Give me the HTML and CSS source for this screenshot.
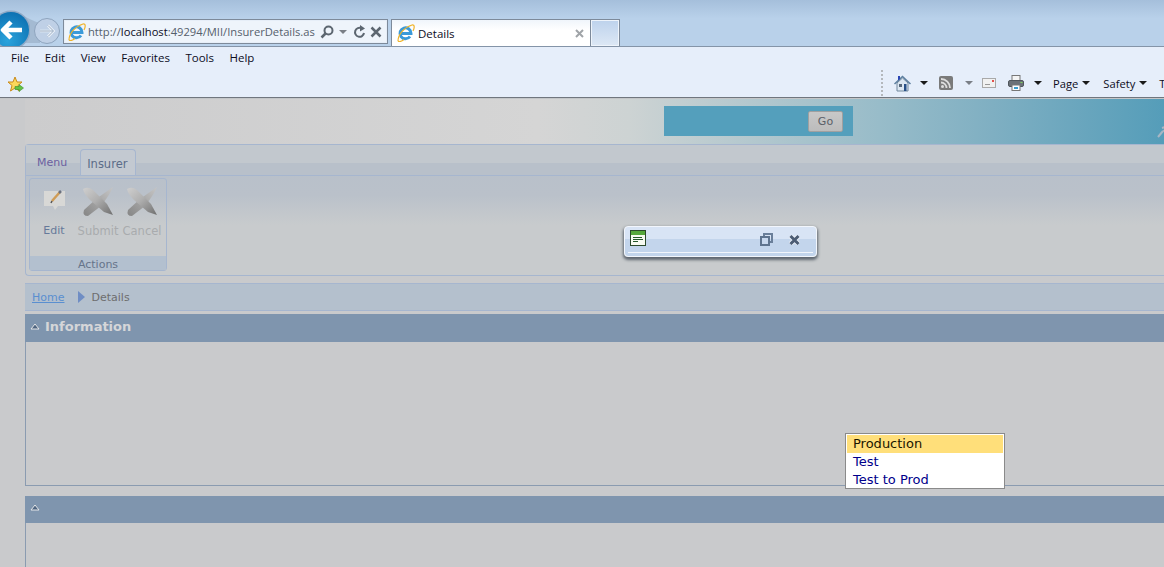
FILE: index.html
```html
<!DOCTYPE html>
<html lang="en">
<head>
<meta charset="utf-8">
<title>Details</title>
<link rel="stylesheet" href="styles.css">
</head>
<body>
<div class="chrome">
  <div class="navbar">
    <svg class="swoosh" width="40" height="30" viewBox="0 0 40 30"><path d="M0 0H8C24 0 30 8 40 10V30H0Z" fill="#a4bad2"/></svg>
    <div class="back"><svg width="30" height="40" viewBox="0 0 30 40"><defs><radialGradient id="bk" cx="0.4" cy="0.8" r="0.9"><stop offset="0" stop-color="#2aa3dc"/><stop offset="1" stop-color="#0b6cae"/></radialGradient></defs><circle cx="11" cy="20" r="19.500" fill="#8fa9c6"/><circle cx="11" cy="20" r="18" fill="url(#bk)"/><path d="M2 20H22M11 12L3 20L11 28" fill="none" stroke="#fff" stroke-width="4.500" stroke-linejoin="round"/></svg></div>
    <div class="forward"><svg width="28" height="28" viewBox="0 0 28 28"><circle cx="14" cy="14" r="12.500" fill="#bfd0e6" stroke="#8ea4be"/><path d="M7 14H20M15 8.500L20.500 14L15 19.500" fill="none" stroke="#f0f5fb" stroke-width="2.500"/><path d="M7 14H20M15 8.500L20.500 14L15 19.500" fill="none" stroke="#97aac0" stroke-width="1"/></svg></div>
    <div class="address">
      <svg class="ie" width="18" height="18" viewBox="0 0 18 18"><use href="#ie-logo"/></svg>
      <span class="url">http://<b>localhost</b>:49294/MII/InsurerDetails.as</span>
      <svg width="14" height="14" viewBox="0 0 14 14"><circle cx="8.500" cy="5.500" r="4" fill="none" stroke="#5c6670" stroke-width="2"/><path d="M5.500 8.500L1.500 12.500" stroke="#5c6670" stroke-width="2.500"/></svg>
      <span class="caret grey"></span>
      <svg class="refresh" width="13" height="14" viewBox="0 0 13 14"><path d="M11 8A4.500 4.500 0 1 1 8.500 3.200" fill="none" stroke="#5c6670" stroke-width="2"/><path d="M7 0L12 3.500L7 6.500Z" fill="#5c6670"/></svg>
      <svg class="stop" width="12" height="12" viewBox="0 0 12 12"><path d="M1.500 1.500L10.500 10.500M10.500 1.500L1.500 10.500" stroke="#5c6670" stroke-width="2.500"/></svg>
    </div>
    <div class="tab">
      <svg width="18" height="18" viewBox="0 0 18 18"><use href="#ie-logo"/></svg>
      <span class="tab-title">Details</span>
      <svg width="9" height="9" viewBox="0 0 9 9"><path d="M1 1L8 8M8 1L1 8" stroke="#a0a4a8" stroke-width="2"/></svg>
    </div>
    <div class="newtab"></div>
  </div>
  <div class="menubar">
    <span>File</span><span>Edit</span><span>View</span><span>Favorites</span><span>Tools</span><span>Help</span>
  </div>
  <div class="favbar">
    <svg class="star" width="17" height="17" viewBox="0 0 17 17"><path d="M8 1L10 6H15L11 9.500L12.500 15L8 12L3.500 15L5 9.500L1 6H6Z" fill="#fbd85c" stroke="#c98a1a"/><path d="M8 10.500H12V8.500L16.500 12L12 15.500V13.500H8Z" fill="#63c244" stroke="#3c8f2c" stroke-width=".6"/></svg>
    <div class="cmd">
      <span class="grip"></span>
      <svg class="i-home" width="17" height="17" viewBox="0 0 17 17"><path d="M3 8V16H14V8L8.500 3Z" fill="#dce7f2" stroke="#71879c"/><path d="M0.500 9L8.500 1.500L16.500 9" fill="none" stroke="#5d7f9f" stroke-width="1.500"/><path d="M4 1H6V4L4 5.500Z" fill="#2a45b5"/><rect x="5" y="9" width="3" height="3" fill="#56677a"/><rect x="10" y="9" width="2.500" height="7" fill="#274f86"/></svg>
      <span class="caret c1"></span>
      <svg class="i-rss" width="14" height="14" viewBox="0 0 14 14"><rect width="14" height="14" rx="2" fill="#7a7a7a"/><circle cx="3.500" cy="10.500" r="1.500" fill="#ddd"/><path d="M2 6.500A5.500 5.500 0 0 1 7.500 12M2 3A9 9 0 0 1 11 12" fill="none" stroke="#ddd" stroke-width="1.800"/></svg>
      <span class="caret grey c2"></span>
      <svg class="i-mail" width="14" height="10" viewBox="0 0 14 10"><rect x=".5" y=".5" width="13" height="9" fill="#f1f1f1" stroke="#a9a9a9"/><rect x="3" y="6" width="5" height="1" fill="#999"/><rect x="10" y="2" width="2" height="2" fill="#e2504c"/></svg>
      <svg class="i-print" width="16" height="16" viewBox="0 0 16 16"><rect x="4" y=".5" width="8" height="6" fill="#f4f4f4" stroke="#777"/><rect x=".5" y="5.500" width="15" height="6" rx="1.500" fill="#6c7278" stroke="#50565c"/><rect x="4" y="10" width="8" height="5.500" fill="#fff" stroke="#777"/><rect x="6" y="12" width="4" height="2" fill="#3b9ecf"/><rect x="12.500" y="7" width="2" height="1" fill="#7fd05a"/></svg>
      <span class="caret c3"></span>
      <span class="cmd-label l-page">Page</span><span class="caret c4"></span>
      <span class="cmd-label l-safety">Safety</span><span class="caret c5"></span>
      <span class="cmd-label l-tools">T</span>
    </div>
  </div>
</div>

<div class="page">
  <div class="masthead">
    <div class="searchbox"><button class="go">Go</button></div>
    <svg class="wrench" width="9" height="12" viewBox="0 0 9 12"><path d="M1 11L6 5M5 2L8 1L8.500 4.500L6 5" fill="none" stroke="#a8b6c4" stroke-width="2"/></svg>
  </div>
  <div class="content">
    <div class="ribbon">
      <div class="ribbon-tabs">
        <span class="rtab">Menu</span>
        <span class="rtab active">Insurer</span>
      </div>
      <div class="ribbon-body">
        <div class="rgroup">
          <div class="rgroup-items">
            <div class="ritem">
              <svg width="26" height="26" viewBox="0 0 26 26"><path d="M3 5H24V20H17L14 24L12 20H3Z" fill="#d8d8d6"/><path d="M11 15L19 6" stroke="#cf9c56" stroke-width="2.500"/><path d="M18 7L20 5" stroke="#6a7180" stroke-width="2.500"/><path d="M11 15L10 17" stroke="#555" stroke-width="1.500"/></svg>
              <span class="enabled">Edit</span>
            </div>
            <div class="ritem wide">
              <svg width="32" height="32" viewBox="0 0 32 32"><use href="#x-mark"/></svg>
              <span>Submit</span>
            </div>
            <div class="ritem wide">
              <svg width="32" height="32" viewBox="0 0 32 32"><use href="#x-mark"/></svg>
              <span>Cancel</span>
            </div>
          </div>
          <div class="rgroup-title">Actions</div>
        </div>
      </div>
    </div>
    <div class="crumbs">
      <a class="crumb-link" href="#">Home</a>
      <svg width="7" height="12" viewBox="0 0 7 12"><path d="M0 0L7 6L0 12Z" fill="#6f8dc4"/></svg>
      <span>Details</span>
    </div>
    <section class="panel first">
      <header class="panel-head">
        <svg class="tri" width="10" height="7" viewBox="0 0 10 7"><path d="M5 1L9 6H1Z" fill="#4f6580" stroke="#e4e6e8"/></svg>
        <span class="panel-title">Information</span>
      </header>
      <div class="panel-body"></div>
    </section>
    <section class="panel second">
      <header class="panel-head">
        <svg class="tri" width="10" height="7" viewBox="0 0 10 7"><path d="M5 1L9 6H1Z" fill="#4f6580" stroke="#e4e6e8"/></svg>
      </header>
      <div class="panel-body"></div>
    </section>
  </div>
</div>

<div class="dialog">
  <svg class="dlg-icon" width="16" height="16" viewBox="0 0 16 16"><rect x=".5" y=".5" width="15" height="15" fill="#f7fbf2" stroke="#2b4a2b"/><rect x="1" y="1" width="14" height="4" fill="#55a83c"/><path d="M3 7.500H12M3 9.500H13M3 11.500H8" stroke="#24572b"/></svg>
  <svg class="dlg-restore" width="13" height="13" viewBox="0 0 13 13"><rect x="4" y="1" width="8" height="8" fill="none" stroke="#6a7f9a" stroke-width="2"/><rect x="1" y="4" width="8" height="8" fill="#c8d8ee" stroke="#5f748f" stroke-width="2"/></svg>
  <svg class="dlg-close" width="11" height="10" viewBox="0 0 11 10"><path d="M1.500 1L9.500 9M9.500 1L1.500 9" stroke="#f2f6fc" stroke-width="4.500"/><path d="M1.500 1L9.500 9M9.500 1L1.500 9" stroke="#4c5c74" stroke-width="3"/></svg>
</div>

<ul class="dropdown">
  <li class="selected">Production</li>
  <li>Test</li>
  <li>Test to Prod</li>
</ul>

<svg class="defs" width="0" height="0">
  <defs>
    <linearGradient id="xa" x1="0" y1="0" x2="1" y2="1"><stop offset="0" stop-color="#cfcfcf"/><stop offset=".45" stop-color="#b0b0b0"/><stop offset="1" stop-color="#6f6f6f"/></linearGradient>
    <linearGradient id="xb" x1="1" y1="0" x2="0" y2="1"><stop offset="0" stop-color="#c6c6c6"/><stop offset="1" stop-color="#858585"/></linearGradient>
    <g id="x-mark">
      <path d="M31 1L14 13L2 24Q0 30 6 30L19 20Q27 10 31 1Z" fill="url(#xb)"/>
      <path d="M1 3Q6 0 11 4L25 18L31 29L22 26L8 14Q2 8 1 3Z" fill="url(#xa)"/>
    </g>
    <g id="ie-logo">
      <path d="M3 9.500H14A5.500 5.500 0 1 0 13 12.500" fill="none" stroke="#3a9ad9" stroke-width="3"/>
      <path d="M1 17C1 10 8 3 15 1C18 0.500 17.500 4 16 7M1 17C2 18 5 17 7 15.500" fill="none" stroke="#f0b429" stroke-width="1.200"/>
    </g>
  </defs>
</svg>
</body>
</html>
```
FILE: styles.css
```css
* { box-sizing: border-box; }
html, body { margin: 0; padding: 0; height: 567px; width: 1164px; overflow: hidden; }
body { position: relative; background: #c9cacc; font-family: "DejaVu Sans", sans-serif; }

.chrome { height: 99px; border-bottom: 1px solid #c4c6c8; font-family: "Open Sans", "Noto Sans", sans-serif; font-size: 11.500px; color: #0c0c1c; background: #e6eefa; }
.navbar { height: 46.500px; position: relative; overflow: hidden; display: flex; align-items: flex-start; background: linear-gradient(#a5bfdb, #b9d1ea 40%, #b9d1ea); border-bottom: 1px solid #8494a8; }
.swoosh { position: absolute; left: 0; top: 13px; }
.back { position: relative; width: 30px; height: 40px; margin-top: 10px; flex: none; }
.back svg { display: block; }
.forward { position: relative; width: 28px; height: 28px; margin: 17px 0 0 3px; flex: none; }
.forward svg { display: block; }
.address { position: relative; width: 325px; height: 25px; margin: 19px 0 0 2px; flex: none; display: flex; align-items: center; padding-left: 4px; background: #eef4fb; border: 1px solid #7d8a9a; outline: 1px solid #e6eef8; outline-offset: -2px; }
.url { width: 232px; margin-left: 2px; color: #55606c; font-size: 11.200px; white-space: nowrap; overflow: hidden; }
.url b { font-weight: 400; color: #0c0c1c; }
.caret { display: inline-block; width: 0; height: 0; border: 4px solid transparent; border-top: 4px solid #1a1a1a; border-bottom: 0; flex: none; }
.caret.grey { border-top-color: #7a7f86; }
.address .caret { margin: 1px 0 0 5px; }
.refresh { margin-left: 6px; }
.stop { margin-left: 4px; }
.tab { width: 200px; height: 27px; margin: 19px 0 0 3px; flex: none; display: flex; align-items: center; padding: 0 6px 0 5px; background: linear-gradient(#f0f5fb, #fff 40%); border: 1px solid #7d8a9a; border-bottom: 0; }
.tab-title { flex: 1; margin-left: 3px; font-size: 11.500px; }
.newtab { width: 29px; height: 27px; margin-top: 19px; flex: none; background: linear-gradient(#bdd2ec, #dde8f5); border: 1px solid #7d8a9a; border-left: 0; border-bottom: 0; box-shadow: inset 0 0 0 1px #eef4fb; }
.menubar { height: 23px; display: flex; gap: 15.500px; padding-left: 11px; align-items: center; background: #e6eefa; line-height: 22px; }
.favbar { height: 28.500px; display: flex; align-items: center; padding-left: 7px; background: #e6eefa; position: relative; border-bottom: 1.500px solid #70767e; }
.star { flex: none; margin-top: 2px; }
.cmd { margin-left: 857px; display: flex; align-items: center; height: 24px; white-space: nowrap; flex: none; }
.grip { width: 2px; height: 26px; border-left: 2px dotted #b4b8bc; margin-right: 11px; }
.cmd-label { font-size: 11.200px; }
.c1 { margin-left: 9px; } .i-rss { margin-left: 11px; } .c2 { margin-left: 12px; }
.i-mail { margin-left: 9px; } .i-print { margin-left: 12px; } .c3 { margin-left: 10px; }
.l-page { margin-left: 11px; } .c4 { margin-left: 4px; } .l-safety { margin-left: 13px; }
.c5 { margin-left: 4px; } .l-tools { margin-left: 12px; }

.page { display: flex; flex-direction: column; }
.masthead { height: 45px; margin-left: 25px; position: relative; background: linear-gradient(90deg, #cccccd 0, #d5d5d5 45%, #cdd3d3 53%, #98bcc9 75%, #7fafc2 85%, #559db9 100%); padding: 7px 0 0 639px; }
.searchbox { width: 189px; height: 30px; background: #549fbc; display: flex; justify-content: flex-end; align-items: center; padding-right: 10px; }
.go { width: 35px; height: 21px; padding: 0; background: linear-gradient(#c8c8c8, #bcbcbc); border: 1px solid #a0a0a0; border-radius: 2px; color: #5a6068; font: 11px "DejaVu Sans", sans-serif; }
.wrench { position: absolute; right: -2px; top: 27px; }

.content { padding-left: 25px; display: flex; flex-direction: column; }
.ribbon { height: 132px; border: 1px solid #a6b6cf; border-right: 0; border-radius: 4px 0 0 4px; background: linear-gradient(#c2c9d0, #bfc6ce 17px, #b8c0ca 17px, #bac1ca 50px, #c8cbcd 80px); }
.ribbon-tabs { height: 31px; display: flex; align-items: flex-end; padding-left: 3px; gap: 5px; border-bottom: 1px solid #a6b6cf; background: linear-gradient(#c2c8ce 18px, #b8c0ca 18px); font-size: 11px; color: #6a5fa0; }
.rtab { height: 26px; padding: 0 8px; line-height: 28px; }
.rtab.active { height: 26px; width: 56px; padding: 0 6px; color: #5b6c88; font-size: 11.500px; background: #c3c9d1; border: 1px solid #a6b6cf; border-bottom: 0; border-radius: 4px 4px 0 0; }
.ribbon-body { padding: 2px 3px; }
.rgroup { width: 138px; height: 93px; border: 1px solid #a6b6cf; border-radius: 3px; display: flex; flex-direction: column; }
.rgroup-items { flex: 1; display: flex; padding-left: 9px; }
.ritem { width: 30px; margin-right: 7px; display: flex; flex-direction: column; align-items: center; font-size: 11.500px; color: #a9abae; padding-top: 7px; }
.ritem.wide { width: 44px; margin-right: 0; padding-top: 7px; }
.ritem span { margin-top: 6px; white-space: nowrap; }
.ritem .enabled { color: #66799a; font-size: 11px; margin-top: 12px; }
.rgroup-title { height: 14px; text-align: center; font-size: 11px; line-height: 17px; color: #66748a; background: #b3c0cf; }

.crumbs { height: 28px; margin-top: 7px; display: flex; align-items: center; padding-left: 7px; background: #b4c0cd; border-top: 1px solid #a6b6cf; border-bottom: 1px solid #a6b6cf; font-size: 11px; color: #6e6e6e; }
.crumb-link { color: #5a8fd0; margin-right: 14px; }
.crumbs svg { margin-right: 6px; }
.panel { display: flex; flex-direction: column; }
.panel.first { margin-top: 3px; height: 172px; }
.panel.second { margin-top: 10px; height: 80px; }
.panel-head { flex: none; height: 28px; display: flex; align-items: center; padding-left: 5px; gap: 5px; background: #7f95ae; font-size: 13px; font-weight: 700; color: #d5d6d8; }
.panel-title { margin-bottom: 4px; }
.second .panel-head { height: 27px; }
.tri { flex: none; margin-bottom: 4px; }
.panel-body { flex: 1; border-left: 1px solid #8a9bb0; border-bottom: 1px solid #8a9bb0; }
.second .panel-body { border-bottom: 0; }

.dialog { position: absolute; left: 624px; top: 226px; width: 193px; height: 31px; background: linear-gradient(#d8e4f5 40%, #c3d5ec 40%); border: 1px solid #f2f6fc; border-radius: 4px; box-shadow: 0 2px 3px 1px #5f6770; }
.dlg-icon { position: absolute; left: 5px; top: 3px; }
.dlg-restore { position: absolute; left: 135px; top: 6px; }
.dlg-close { position: absolute; left: 164px; top: 8px; }
.dialog::after { content: ""; position: absolute; left: 3px; right: 3px; bottom: 3px; height: 1px; background: #f2f6fc; }

.dropdown { position: absolute; left: 845px; top: 433px; width: 160px; height: 56px; margin: 0; padding: 1px; list-style: none; background: #fff; border: 1px solid #8a8a8a; font-size: 13px; color: #00008b; }
.dropdown li { height: 18px; line-height: 18px; padding-left: 6px; }
.dropdown .selected { background: #ffdf7a; color: #1a1600; }
.defs { position: absolute; }
```
